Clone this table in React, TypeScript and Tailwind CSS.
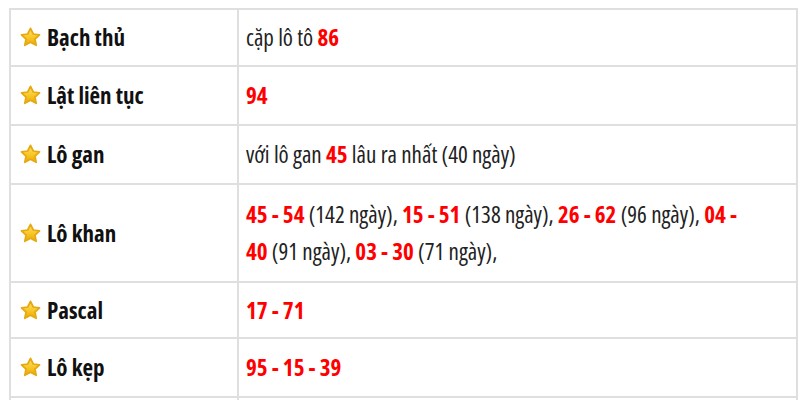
import React from "react";

function Star() {
  return (
    <svg width="21" height="21" viewBox="0 0 24 24" className="shrink-0">
      <defs>
        <linearGradient id="sg" x1="0" y1="0" x2="0" y2="1">
          <stop offset="0" stopColor="#ffe26a" />
          <stop offset="0.55" stopColor="#f8c627" />
          <stop offset="1" stopColor="#eaa806" />
        </linearGradient>
      </defs>
      <path
        d="M12 1.6 L15.2 8 L22.3 8.9 L17.1 13.8 L18.5 20.9 L12 17.4 L5.5 20.9 L6.9 13.8 L1.7 8.9 L8.8 8 Z"
        fill="url(#sg)"
        stroke="#e6a912"
        strokeWidth="2"
        strokeLinejoin="round"
      />
    </svg>
  );
}

function R({ children }: { children: React.ReactNode }) {
  return <span className="font-bold text-[#ff0000]">{children}</span>;
}

const rows: { label: string; content: React.ReactNode; h: string; tall?: boolean }[] = [
  { label: "Bạch thủ", h: "h-[57px]", content: <>cặp lô tô <R>86</R></> },
  { label: "Lật liên tục", h: "h-[59px]", content: <R>94</R> },
  { label: "Lô gan", h: "h-[59px]", content: <>với lô gan <R>45</R> lâu ra nhất (40 ngày)</> },
  {
    label: "Lô khan",
    h: "h-[98px]",
    tall: true,
    content: (
      <>
        <R>45 - 54</R> (142 ngày), <R>15 - 51</R> (138 ngày), <R>26 - 62</R> (96 ngày), <R>04 -</R>
        <br />
        <R>40</R> (91 ngày), <R>03 - 30</R> (71 ngày),
      </>
    ),
  },
  { label: "Pascal", h: "h-[56px]", content: <R>17 - 71</R> },
  { label: "Lô kẹp", h: "h-[59px]", content: <R>95 - 15 - 39</R> },
  { label: "", h: "h-[58px]", content: "" },
];

export default function App() {
  return (
    <div className="w-[800px] h-[400px] overflow-hidden bg-white pt-2 pl-[9px] font-['Open_Sans',sans-serif] [font-stretch:condensed] text-[23px] text-[#222]">
      <table className="w-[789px] border-collapse border-2 border-[#dfdfdf]">
        <tbody>
          {rows.map((r, i) => (
            <tr key={i} className={r.h}>
              <td className="w-[228px] border-2 border-[#dfdfdf] pl-[9px] pr-2 align-middle">
                {r.label && (
                  <div className="flex items-center gap-[6px]">
                    <Star />
                    <span className="font-bold text-[#111]">{r.label}</span>
                  </div>
                )}
              </td>
              <td className={"border-2 border-[#dfdfdf] pl-[7px] pr-2 align-middle " + (r.tall ? "leading-[37px]" : "")}>
                {r.content}
              </td>
            </tr>
          ))}
        </tbody>
      </table>
    </div>
  );
}
